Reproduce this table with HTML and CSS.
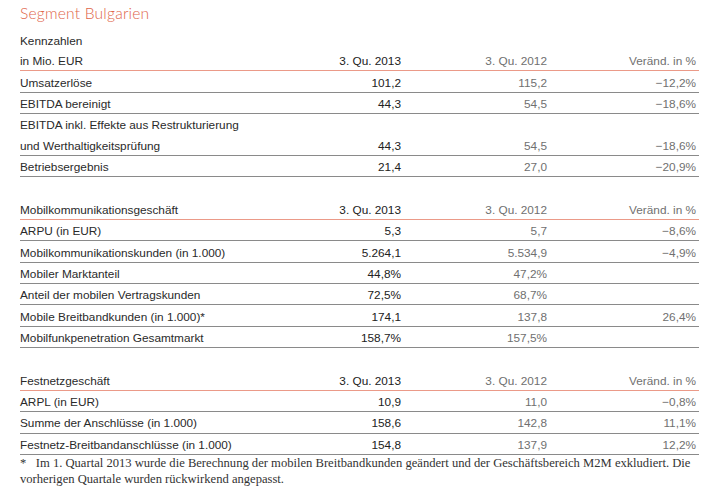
FILE: index.html
```html
<!DOCTYPE html>
<html lang="de">
<head>
<meta charset="utf-8">
<link rel="stylesheet" href="styles.css">
</head>
<body>
<div class="page">
  <h1 class="title">Segment Bulgarien</h1>
  <table class="kpi">
    <colgroup><col class="c-label"><col class="c-v1"><col class="c-v2"><col class="c-v3"></colgroup>
    <tr class="caption"><td colspan="4">Kennzahlen</td></tr>
    <tr class="head"><td>in Mio. EUR</td><td class="v1">3. Qu. 2013</td><td class="v2">3. Qu. 2012</td><td class="v3">Veränd. in %</td></tr>
    <tr><td>Umsatzerlöse</td><td class="v1">101,2</td><td class="v2">115,2</td><td class="v3">−12,2%</td></tr>
    <tr><td>EBITDA bereinigt</td><td class="v1">44,3</td><td class="v2">54,5</td><td class="v3">−18,6%</td></tr>
    <tr class="open"><td colspan="4">EBITDA inkl. Effekte aus Restrukturierung</td></tr>
    <tr><td>und Werthaltigkeitsprüfung</td><td class="v1">44,3</td><td class="v2">54,5</td><td class="v3">−18,6%</td></tr>
    <tr><td>Betriebsergebnis</td><td class="v1">21,4</td><td class="v2">27,0</td><td class="v3">−20,9%</td></tr>
    <tr class="spacer"><td colspan="4"></td></tr>
    <tr class="head"><td>Mobilkommunikationsgeschäft</td><td class="v1">3. Qu. 2013</td><td class="v2">3. Qu. 2012</td><td class="v3">Veränd. in %</td></tr>
    <tr><td>ARPU (in EUR)</td><td class="v1">5,3</td><td class="v2">5,7</td><td class="v3">−8,6%</td></tr>
    <tr><td>Mobilkommunikationskunden (in 1.000)</td><td class="v1">5.264,1</td><td class="v2">5.534,9</td><td class="v3">−4,9%</td></tr>
    <tr><td>Mobiler Marktanteil</td><td class="v1">44,8%</td><td class="v2">47,2%</td><td class="v3"></td></tr>
    <tr><td>Anteil der mobilen Vertragskunden</td><td class="v1">72,5%</td><td class="v2">68,7%</td><td class="v3"></td></tr>
    <tr><td>Mobile Breitbandkunden (in 1.000)*</td><td class="v1">174,1</td><td class="v2">137,8</td><td class="v3">26,4%</td></tr>
    <tr><td>Mobilfunkpenetration Gesamtmarkt</td><td class="v1">158,7%</td><td class="v2">157,5%</td><td class="v3"></td></tr>
    <tr class="spacer"><td colspan="4"></td></tr>
    <tr class="head"><td>Festnetzgeschäft</td><td class="v1">3. Qu. 2013</td><td class="v2">3. Qu. 2012</td><td class="v3">Veränd. in %</td></tr>
    <tr><td>ARPL (in EUR)</td><td class="v1">10,9</td><td class="v2">11,0</td><td class="v3">−0,8%</td></tr>
    <tr><td>Summe der Anschlüsse (in 1.000)</td><td class="v1">158,6</td><td class="v2">142,8</td><td class="v3">11,1%</td></tr>
    <tr><td>Festnetz-Breitbandanschlüsse (in 1.000)</td><td class="v1">154,8</td><td class="v2">137,9</td><td class="v3">12,2%</td></tr>
  </table>
  <p class="note">*&nbsp;&nbsp; Im 1. Quartal 2013 wurde die Berechnung der mobilen Breitbandkunden geändert und der Geschäftsbereich M2M exkludiert. Die<br>vorherigen Quartale wurden rückwirkend angepasst.</p>
</div>
</body>
</html>
```

FILE: styles.css
```css
html, body {
  margin: 0;
  padding: 0;
  background: #ffffff;
}

.page {
  padding: 0 28px 0 20px;
  width: 679px;
}

.title {
  margin: 0;
  height: 30px;
  padding-top: 2px;
  box-sizing: border-box;
  font-family: Lato, sans-serif;
  font-weight: 300;
  font-size: 15.6px;
  line-height: 22px;
  color: #e0654a;
  letter-spacing: 0.2px;
}

.kpi {
  width: 679px;
  border-collapse: collapse;
  font-family: "Liberation Sans", Arial, sans-serif;
  font-size: 11.8px;
  color: #2a2a2a;
}

.c-label { width: 300px; }
.c-v1 { width: 81px; }
.c-v2 { width: 146px; }
.c-v3 { width: 152px; }

.kpi td {
  height: 18.4px;
  padding: 2px 0 0;
  vertical-align: middle;
  border-bottom: 1px solid #8a8a8a;
  white-space: nowrap;
}

.kpi td.v1 { text-align: right; color: #222; }
.kpi td.v2 { text-align: right; color: #707070; }
.kpi td.v3 { text-align: right; color: #707070; padding-right: 3px; }

.kpi tr.caption td,
.kpi tr.open td,
.kpi tr.spacer td {
  border-bottom: none;
}

.kpi tr.caption td { height: 18px; }
.kpi tr.spacer td { height: 19.2px; }

.kpi tr.head td {
  border-bottom: 1px solid #eb9a88;
}

.note {
  margin: 0;
  font-family: "Liberation Serif", "Times New Roman", serif;
  font-size: 12.6px;
  line-height: 16px;
  color: #333;
}
```
